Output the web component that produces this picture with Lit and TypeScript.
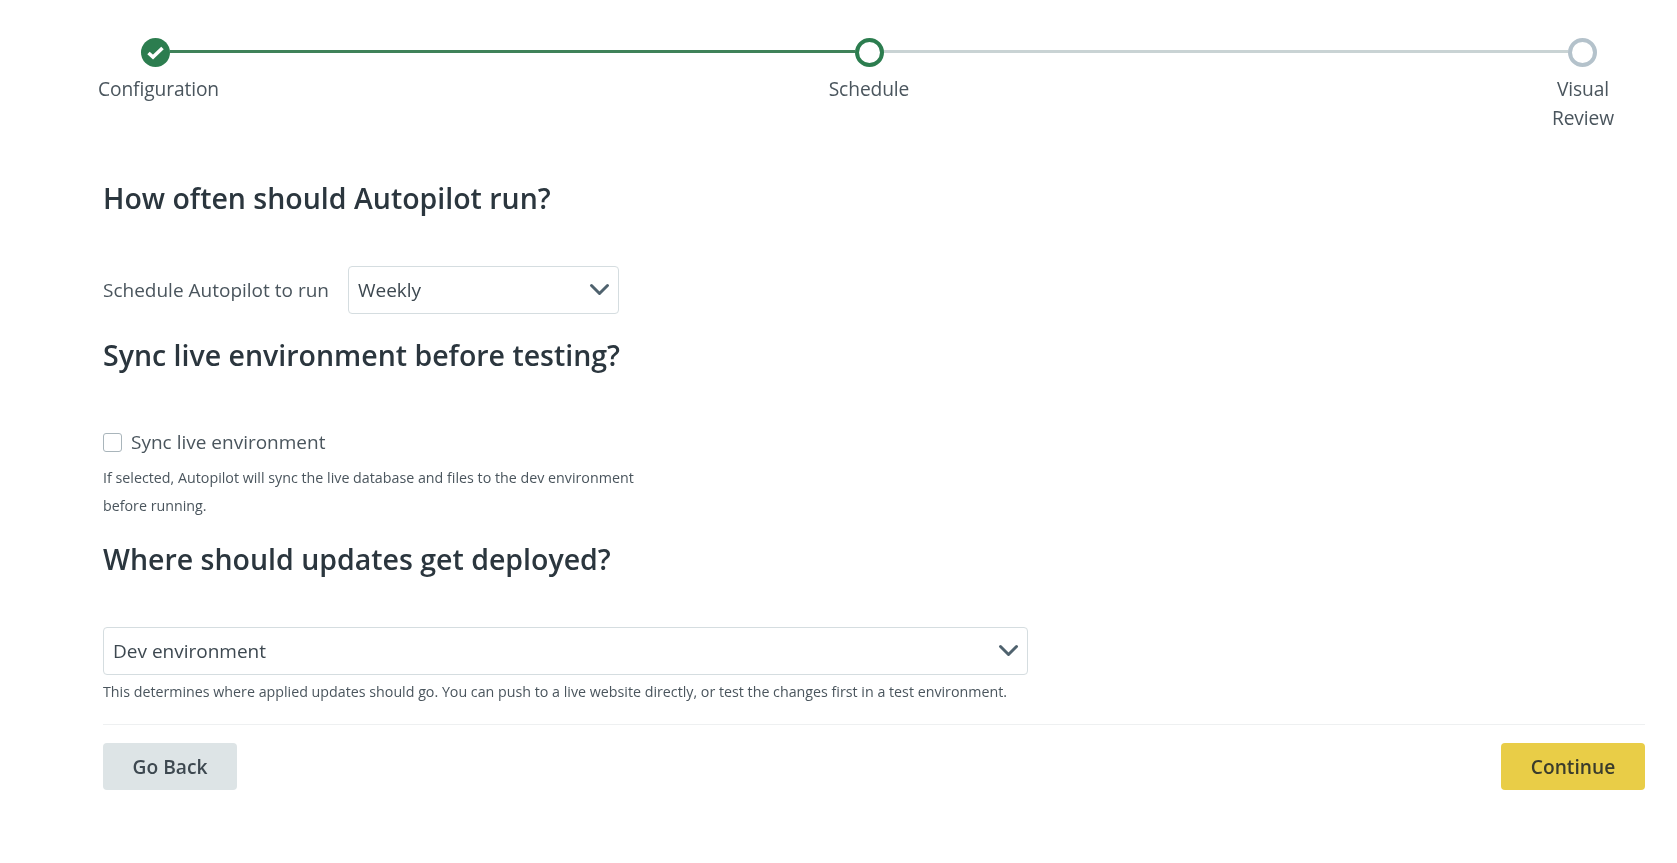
import { LitElement, html, css } from "lit";
import { customElement } from "lit/decorators.js";

const chevron = html`<svg class="chev" width="21" height="14" viewBox="0 0 21 14" fill="none"><path d="M2.5 2.5 L10.5 10.5 L18.5 2.5" stroke="#4f626e" stroke-width="3" stroke-linecap="round" stroke-linejoin="round"/></svg>`;

@customElement("app-root")
export class AppRoot extends LitElement {
  static styles = css`
    :host { display: block; width: 1677px; height: 863px; overflow: hidden; background: #fff; font-family: "Open Sans", "Noto Sans", sans-serif; color: #3d4850; filter: blur(0.55px); }
    .track { display: flex; align-items: center; margin: 0 80px 0 141px; padding-top: 38px; }
    .dot { width: 29px; height: 29px; border-radius: 50%; box-sizing: border-box; flex: none; display: flex; align-items: center; justify-content: center; }
    .done { background: #2c7d4f; }
    .current { border: 4px solid #2c7d4f; }
    .todo { border: 4px solid #b4c2cb; }
    .line { flex: 1; height: 3px; margin-top: -2px; }
    .line.on { background: #3f8259; }
    .line.off { background: #c9d3d4; }
    .labels { display: grid; grid-template-columns: 125px 603px 90px 624px 90px; margin: 8px 0 0 96px; font-size: 19.2px; line-height: 28.5px; color: #4a555d; letter-spacing: -0.1px; }
    .labels div { text-align: center; white-space: nowrap; }
    .labels .mid { grid-column: 3; }
    .labels .end { grid-column: 5; }
    .form { padding: 46px 32px 0 103px; }
    h2 { margin: 0; font-size: 28.5px; line-height: 40px; font-weight: 600; color: #2b363e; }
    .row { display: flex; align-items: center; gap: 19px; margin-top: 48px; font-size: 19px; color: #4a555d; }
    .select { box-sizing: border-box; height: 48px; border: 1.5px solid #d5dde0; border-radius: 4px; display: flex; align-items: center; justify-content: space-between; padding: 0 8px 0 9px; font-size: 19px; color: #3d4850; background: #fff; }
    .s1 { width: 271px; }
    .s2 { width: 925px; margin-top: 48px; }
    .h2b { margin-top: 21px; }
    .check { display: flex; align-items: center; gap: 9px; margin-top: 53px; font-size: 19px; line-height: 28px; color: #4a555d; }
    .box { width: 19px; height: 19px; box-sizing: border-box; border: 1.5px solid #a9b5bb; border-radius: 3px; }
    .help { font-size: 14.27px; line-height: 28px; color: #4a555d; width: 560px; margin-top: 8px; }
    .h2c { margin-top: 19px; }
    .help2 { font-size: 14.25px; line-height: 20px; color: #4a555d; margin-top: 7px; white-space: nowrap; }
    hr { border: 0; border-top: 1.5px solid #eef0f1; margin: 22px 0 18px; }
    .actions { display: flex; justify-content: space-between; }
    button { height: 47px; border: 0; border-radius: 4px; font: 600 19.2px "Open Sans", sans-serif; color: #3d4850; padding: 0; }
    .back { width: 134px; background: #dde4e6; }
    .next { width: 144px; background: #e9cd47; color: #3a3c2c; }
  `;

  render() {
    return html`
      <div class="track">
        <span class="dot done"><svg width="19" height="15" viewBox="0 0 19 15" fill="none"><path d="M2.5 8 L7 12 L16.5 3" stroke="#fff" stroke-width="3.6"/></svg></span>
        <span class="line on"></span>
        <span class="dot current"></span>
        <span class="line off"></span>
        <span class="dot todo"></span>
      </div>
      <div class="labels">
        <div>Configuration</div>
        <div class="mid">Schedule</div>
        <div class="end">Visual<br />Review</div>
      </div>
      <div class="form">
        <h2>How often should Autopilot run?</h2>
        <div class="row">
          <span>Schedule Autopilot to run</span>
          <div class="select s1">Weekly ${chevron}</div>
        </div>
        <h2 class="h2b">Sync live environment before testing?</h2>
        <div class="check"><span class="box"></span><span>Sync live environment</span></div>
        <div class="help">If selected, Autopilot will sync the live database and files to the dev environment before running.</div>
        <h2 class="h2c">Where should updates get deployed?</h2>
        <div class="select s2">Dev environment ${chevron}</div>
        <div class="help2">This determines where applied updates should go. You can push to a live website directly, or test the changes first in a test environment.</div>
        <hr />
        <div class="actions">
          <button class="back">Go Back</button>
          <button class="next">Continue</button>
        </div>
      </div>
    `;
  }
}
